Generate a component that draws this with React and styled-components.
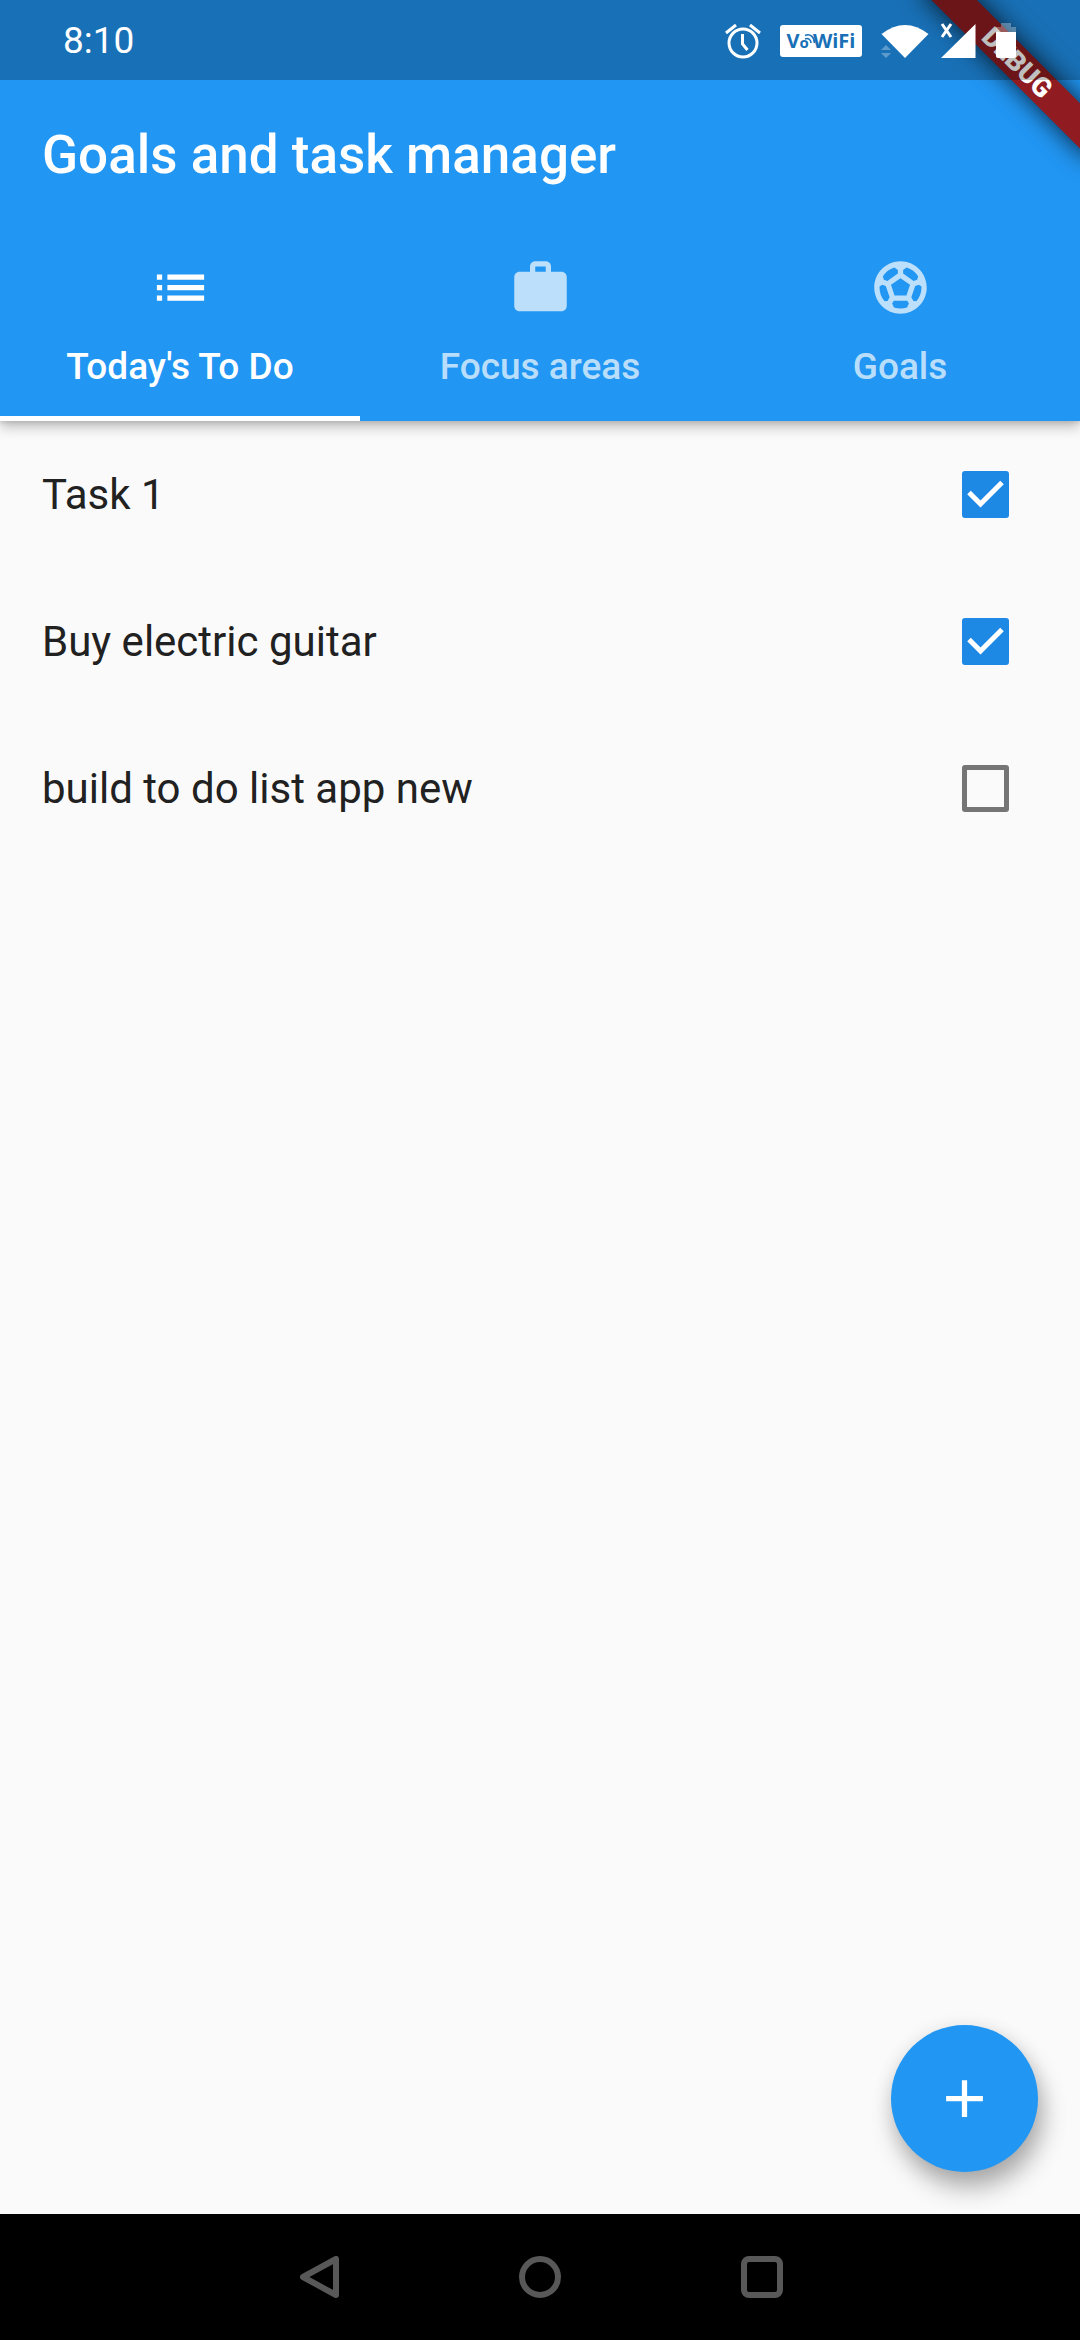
import React, { useState } from 'react';
import styled, { createGlobalStyle, css } from 'styled-components';
import { MdList, MdWork, MdSportsSoccer, MdAdd } from 'react-icons/md';

const GlobalStyle = createGlobalStyle`
  *, *::before, *::after { box-sizing: border-box; }
  body { margin: 0; background: #fafafa; }
  button, input { font: inherit; margin: 0; }
`;

const Screen = styled.div`
  min-height: 100vh;
  display: flex;
  flex-direction: column;
  background: #fafafa;
  color: #212121;
  font-family: Roboto, sans-serif;
`;

const Header = styled.header`
  position: relative;
  z-index: 1;
  background: #2196f3;
  color: #fff;
  box-shadow: 0 6px 12px rgba(0, 0, 0, 0.24), 0 2px 4px rgba(0, 0, 0, 0.1);
`;

const StatusBar = styled.div`
  position: relative;
  z-index: 2;
  height: 80px;
  padding: 2px 63px 0;
  display: flex;
  align-items: center;
  justify-content: space-between;
  background: rgba(0, 0, 0, 0.25);
`;

const Clock = styled.time`
  font-size: 37px;
  line-height: 44px;
`;

const StatusIcons = styled.div`
  display: flex;
  align-items: center;
`;

const StatusGlyph = styled.svg`
  display: block;
  height: 36px;
  width: ${(p) => p.$width}px;
  margin-left: ${(p) => p.$gap || 0}px;
`;

const VoWifi = styled.span`
  position: relative;
  width: 82px;
  height: 32px;
  margin-left: 19px;
  display: flex;
  align-items: baseline;
  justify-content: center;
  border-radius: 3px;
  background: #fff;
  color: #1970b6;
  font: 700 20px/32px 'Open Sans', sans-serif;
`;

const SmallO = styled.span`
  margin-right: 4px;
  font-size: 15px;
`;

const Waves = styled.svg`
  position: absolute;
  left: 24px;
  top: 8px;
  width: 12px;
  height: 12px;
`;

const RibbonClip = styled.div`
  position: absolute;
  z-index: 1;
  top: 0;
  right: 0;
  width: 240px;
  height: 240px;
  overflow: hidden;
  pointer-events: none;
`;

const Ribbon = styled.div`
  position: absolute;
  top: 73px;
  right: -120px;
  width: 240px;
  height: 32px;
  transform: rotate(45deg);
  transform-origin: 50% -73px;
  background: #901c22;
  box-shadow: 0 0 26px rgba(0, 0, 0, 0.8);
  text-align: center;
  font-size: 27px;
  line-height: 32px;
  font-weight: 900;
`;

const Title = styled.h1`
  margin: 0;
  padding: 2px 42px 0;
  font-size: 53px;
  line-height: 146px;
  font-weight: 500;
`;

const Tabs = styled.nav`
  display: flex;
`;

const Tab = styled.button`
  flex: 1;
  height: 193px;
  padding: 0;
  display: flex;
  flex-direction: column;
  align-items: center;
  justify-content: center;
  gap: 26px;
  border: 0;
  border-bottom: 5px solid transparent;
  background: none;
  color: rgba(255, 255, 255, 0.7);
  font-size: 37px;
  line-height: 44px;
  font-weight: 500;
  cursor: pointer;
  ${(p) => p.$active && css`
    border-bottom-color: #fff;
    color: #fff;
  `}
`;

const Main = styled.main`
  position: relative;
  flex: 1;
`;

const TaskList = styled.ul`
  margin: 0;
  padding: 0;
  list-style: none;
`;

const TaskRow = styled.label`
  height: 147px;
  padding: 0 71px 0 42px;
  display: flex;
  align-items: center;
  justify-content: space-between;
  font-size: 42px;
  line-height: 56px;
  cursor: pointer;
`;

const CheckWrap = styled.span`
  position: relative;
  width: 47px;
  height: 47px;
`;

const CheckBox = styled.input`
  appearance: none;
  display: block;
  width: 47px;
  height: 47px;
  border: 5px solid #757575;
  border-radius: 3px;
  &:checked {
    border-color: #1e88e5;
    background: #1e88e5;
  }
`;

const CheckMark = styled.svg`
  position: absolute;
  inset: 0;
  pointer-events: none;
`;

const AddButton = styled.button`
  position: absolute;
  right: 42px;
  bottom: 42px;
  width: 147px;
  height: 147px;
  padding: 0;
  display: grid;
  place-items: center;
  border: 0;
  border-radius: 50%;
  background: #2196f3;
  color: #fff;
  box-shadow: 5px 16px 24px rgba(0, 0, 0, 0.3), 0 2px 20px rgba(0, 0, 0, 0.08);
  cursor: pointer;
`;

const NavBar = styled.footer`
  height: 126px;
  display: flex;
  align-items: center;
  justify-content: center;
  background: #000;
`;

const NavButton = styled.button`
  width: 222px;
  height: 126px;
  padding: 0;
  display: grid;
  place-items: center;
  border: 0;
  background: none;
  color: #585858;
  cursor: pointer;
`;

const NavGlyph = styled.svg.attrs({
  width: 42,
  height: 42,
  viewBox: '0 0 42 42',
  fill: 'none',
  stroke: 'currentColor',
  strokeWidth: 6,
  strokeLinejoin: 'round',
})`
  display: block;
`;

const TABS = [
  { label: "Today's To Do", Icon: MdList },
  { label: 'Focus areas', Icon: MdWork },
  { label: 'Goals', Icon: MdSportsSoccer },
];

const INITIAL_TASKS = [
  { name: 'Task 1', done: true },
  { name: 'Buy electric guitar', done: true },
  { name: 'build to do list app new', done: false },
];

function StatusArea() {
  return (
    <StatusBar>
      <Clock>8:10</Clock>
      <StatusIcons>
        <StatusGlyph $width={36} viewBox="0 0 36 36" fill="none" stroke="#fff" strokeWidth="3">
          <circle cx="18" cy="20" r="14" />
          <path d="M17.500 11v10l5 6" />
          <path d="M1 10l10-8M35 10L25 2" />
        </StatusGlyph>
        <VoWifi>
          V<SmallO>o</SmallO>WiFi
          <Waves viewBox="0 0 12 12" fill="none" stroke="#1970b6" strokeWidth="1.600">
            <path d="M1 2.500C6 0 10.500 4 10.500 10M1 6c3-1.500 6 0.500 6 4" />
          </Waves>
        </VoWifi>
        <StatusGlyph $width={50} $gap={17} viewBox="0 0 50 36">
          <path d="M2.500 11Q26 -7 49.500 11L26 35Z" fill="#fff" />
          <path d="M2 27l5-5 5 5zM2 30h10l-5 5z" fill="#fff" opacity="0.3" />
        </StatusGlyph>
        <StatusGlyph $width={36} $gap={11} viewBox="0 0 36 36">
          <path d="M35.500 1v34H1z" fill="#fff" />
          <path d="M2 1l9 13M11 1L2 14" stroke="#fff" strokeWidth="3" fill="none" />
        </StatusGlyph>
        <StatusGlyph $width={22} $gap={19} viewBox="0 0 22 36">
          <path d="M6 0h10v4h5v5H1V4h5z" fill="#fff" opacity="0.3" />
          <path d="M1 9h20v24q0 2-2 2H3q-2 0-2-2z" fill="#fff" />
        </StatusGlyph>
      </StatusIcons>
    </StatusBar>
  );
}

export default function App() {
  const [active, setActive] = useState(0);
  const [tasks, setTasks] = useState(INITIAL_TASKS);
  const toggle = (index) =>
    setTasks(tasks.map((t, i) => (i === index ? { ...t, done: !t.done } : t)));

  return (
    <Screen>
      <GlobalStyle />
      <Header>
        <StatusArea />
        <RibbonClip>
          <Ribbon>DEBUG</Ribbon>
        </RibbonClip>
        <Title>Goals and task manager</Title>
        <Tabs>
          {TABS.map(({ label, Icon }, i) => (
            <Tab key={label} $active={i === active} onClick={() => setActive(i)}>
              <Icon size={63} />
              {label}
            </Tab>
          ))}
        </Tabs>
      </Header>
      <Main>
        <TaskList>
          {tasks.map((task, i) => (
            <li key={task.name}>
              <TaskRow>
                {task.name}
                <CheckWrap>
                  <CheckBox type="checkbox" checked={task.done} onChange={() => toggle(i)} />
                  {task.done && (
                    <CheckMark viewBox="0 0 47 47" fill="none" stroke="#fff" strokeWidth="5">
                      <path d="M7 21.500L18.500 33L40 11.500" />
                    </CheckMark>
                  )}
                </CheckWrap>
              </TaskRow>
            </li>
          ))}
        </TaskList>
        <AddButton aria-label="Add task">
          <MdAdd size={63} />
        </AddButton>
      </Main>
      <NavBar>
        <NavButton aria-label="Back">
          <NavGlyph><path d="M39 3v36L6 21z" /></NavGlyph>
        </NavButton>
        <NavButton aria-label="Home">
          <NavGlyph><circle cx="21" cy="21" r="18" /></NavGlyph>
        </NavButton>
        <NavButton aria-label="Recent apps">
          <NavGlyph><rect x="3" y="3" width="36" height="36" rx="5" /></NavGlyph>
        </NavButton>
      </NavBar>
    </Screen>
  );
}
